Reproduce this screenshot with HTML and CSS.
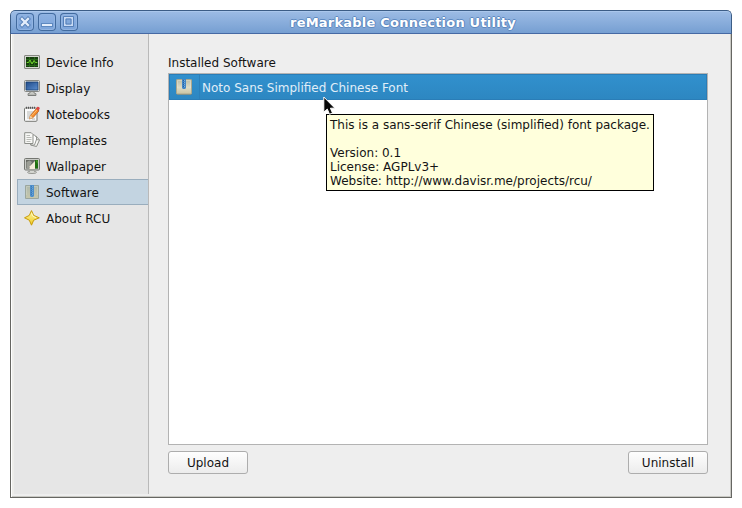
FILE: index.html
```html
<!DOCTYPE html>
<html lang="en">
<head>
<meta charset="utf-8">
<title>reMarkable Connection Utility</title>
<link rel="stylesheet" href="styles.css">
</head>
<body>
<svg width="0" height="0" class="defs">
  <defs>
    <linearGradient id="gold" x2="0" y2="1"><stop stop-color="#fff9a8"/><stop offset="1" stop-color="#efc91f"/></linearGradient>
    <linearGradient id="screen" x2="1" y2="1"><stop stop-color="#204a87"/><stop offset="1" stop-color="#5b8fd0"/></linearGradient>
    <linearGradient id="box" x2="0" y2="1"><stop stop-color="#b9bca8"/><stop offset=".55" stop-color="#dedbc5"/><stop offset="1" stop-color="#c9c4a3"/></linearGradient>
    <linearGradient id="boxmuted" x2="0" y2="1"><stop stop-color="#aeb9ac"/><stop offset="1" stop-color="#c6c7ac"/></linearGradient>
  </defs>
</svg>
<div class="window">
  <header class="titlebar">
    <div class="controls">
      <button class="control" aria-label="Close"><svg width="18" height="18" viewBox="0 0 18 18"><path d="M6 6l6 6m0-6l-6 6" stroke="#5680b8" stroke-width="4.2" stroke-linecap="square"/><path d="M6 6l6 6m0-6l-6 6" stroke="#e3edfb" stroke-width="2.3" stroke-linecap="square"/></svg></button>
      <button class="control" aria-label="Minimize"><svg width="18" height="18" viewBox="0 0 18 18"><path d="M3 10h12v4H3z" fill="#5e89c0"/><path d="M4 11h10v2H4z" fill="#e3edfb"/></svg></button>
      <button class="control" aria-label="Maximize"><svg width="18" height="18" viewBox="0 0 18 18"><path d="M3.5 3.5h10v10h-10z" fill="none" stroke="#5680b8"/><path d="M4.75 4.75h7.5v7.5h-7.5z" fill="none" stroke="#c9dbf4" stroke-width="1.5"/><path d="M6 6h5v5H6z" fill="#82a9dc" stroke="#5680b8"/></svg></button>
    </div>
    <h1>reMarkable Connection Utility</h1>
  </header>
  <div class="body">
    <nav class="sidebar">
      <a class="item"><svg width="16" height="16" viewBox="0 0 16 16"><rect x=".5" y="1.5" width="15" height="13" rx=".5" fill="#d5d7d1" stroke="#878983"/><path d="M2 3h12v10H2z" fill="#173f0d"/><path d="M2 5.5h12M2 8.5h12M2 11.5h12M5.5 3v10M10.5 3v10" stroke="#28671a"/><path d="M3 8.5h1.5L6 6l2 4 2-3.5 1.5 2H13" fill="none" stroke="#73d52b"/></svg><span>Device Info</span></a>
      <a class="item"><svg width="16" height="16" viewBox="0 0 16 16"><path d="M6 11h4v2l2 .7v1.8H4v-1.8L6 13z" fill="#c7c9c4" stroke="#777a76" stroke-width=".8"/><rect x=".5" y=".5" width="15" height="11" rx="1" fill="#deded9" stroke="#858783"/><path d="M2 2h12v8H2z" fill="url(#screen)" stroke="#163c70" stroke-width=".8"/><path d="M4 15.3h8" stroke="#777a76"/></svg><span>Display</span></a>
      <a class="item"><svg width="16" height="16" viewBox="0 0 16 16"><rect x=".5" y="2" width="12.5" height="13.3" rx="1" fill="#fafafa" stroke="#777974"/><path d="M2 1.8h10" stroke="#555" stroke-width="2" stroke-dasharray="1 1"/><path d="M3 6h7M3 8h6M3 10h3M3 12h3M8 13h3" stroke="#b6b8b4"/><path d="M5.4 13l1-3.5 6-7L15 4.8l-6 6.9z" fill="#f58b2a" stroke="#b85b18" stroke-width=".7"/><path d="M7.7 9.7l5.6-6.2" stroke="#ffc171"/><path d="M5.2 13.1l1.2-3.5 2.5 2.2z" fill="#edd1a5"/><path d="M12 2.5L13.2 1c1.2-1 3.2.7 2.3 2l-1.2 1.7z" fill="#dc4545"/></svg><span>Notebooks</span></a>
      <a class="item"><svg width="16" height="16" viewBox="0 0 16 16"><path d="M9 4l3.5.5 3 3.5-3 6.5-6-1.5z" fill="#f7f7f5" stroke="#8c8e89"/><path d="M7 2.5l3.5.5L13 6l-2.5 7H7z" fill="#fff" stroke="#92948f"/><path d="M.7.7h6.5L9 2.5v9H.7z" fill="#f8f8f6" stroke="#8c8e89"/><path d="M2.5 3.5H6m-3.5 2h5m-5 2h5m-5 2h4" stroke="#babcb7"/><path d="M12.5 4.8v2.8l2.8.3" fill="#dcdcda" stroke="#888a85" stroke-width=".8"/></svg><span>Templates</span></a>
      <a class="item"><svg width="16" height="16" viewBox="0 0 16 16"><ellipse cx="8" cy="14.3" rx="4.5" ry="1.2" fill="#d7d8d3" stroke="#81837d" stroke-width=".8"/><path d="M6 11h4v3H6z" fill="#d7d8d3"/><rect x=".5" y=".5" width="15" height="11.5" rx="1" fill="#c9cbc6" stroke="#747671"/><path d="M2 2h12v8.5H2z" fill="#686a65"/><path d="M2.5 10V4l3-1.5L8 4l-3 6z" fill="#9c9e96"/><path d="M11 2h3v8.5h-3z" fill="#206d10"/><path d="M12 2.5h1.5V6z" fill="#57a82e"/><path d="M5.5 11V8.5L11 3v8z" fill="#f4ead8"/></svg><span>Wallpaper</span></a>
      <a class="item selected"><svg width="16" height="16" viewBox="0 0 16 16"><path d="M1.5 1.5h13v13h-13z" fill="url(#boxmuted)" stroke="#9aa69e"/><path d="M2.5 11V2.5h11V11" fill="none" stroke="#cdd3c6" opacity=".6"/><path d="M6 1h4v11l-1 1H7l-1-1z" fill="#4e8fc9"/><path d="M7.5 2v9" stroke="#3977b5" stroke-dasharray="1 1"/><path d="M8.5 2v9" stroke="#6da6d8" stroke-dasharray="1 1"/></svg><span>Software</span></a>
      <a class="item"><svg width="16" height="16" viewBox="0 0 16 16"><path d="M7.5.6l2.2 4.8 5.6 2.4-5.6 2.4-2.2 5-2.2-5L.5 7.8l4.8-2.4z" fill="url(#gold)" stroke="#c99b08" stroke-linejoin="round"/><path d="M7.5 3l1.3 3.2L12 7.7" fill="none" stroke="#fffbd1" stroke-width=".8"/></svg><span>About RCU</span></a>
    </nav>
    <main class="pane">
      <h2>Installed Software</h2>
      <div class="list">
        <div class="row"><span class="cell-icon"><svg width="16" height="16" viewBox="0 0 16 16"><path d="M1 15.5h14.5" stroke="#777864" opacity=".6"/><rect x=".5" y=".5" width="15" height="14.5" rx=".6" fill="url(#box)" stroke="#aaa78d"/><path d="M1.5 9V1.5h13V9" fill="none" stroke="#e6e3d1" opacity=".5"/><path d="M6 0h4v9l-1 1H7L6 9z" fill="#4386c5"/><path d="M7.5 1v8" stroke="#245e9c" stroke-dasharray="1 1"/><path d="M8.5 1v8" stroke="#75afe3" stroke-dasharray="1 1"/></svg></span><span class="cell-text">Noto Sans Simplified Chinese Font</span></div>
      </div>
      <div class="actions"><button class="button">Upload</button><button class="button">Uninstall</button></div>
    </main>
  </div>
</div>
<div class="tooltip">This is a sans-serif Chinese (simplified) font package.

Version: 0.1
License: AGPLv3+
Website: http://www.davisr.me/projects/rcu/</div>
<svg class="cursor" width="13" height="20" viewBox="0 0 13 20"><path d="M.8 1v15.2l3.5-3.1 2.2 5.2 3-1.3-2.1-4.8h4.5z" fill="#080808" stroke="#fff"/></svg>
</body>
</html>
```
FILE: styles.css
```css
* { box-sizing: border-box; }
body {
  margin: 0;
  padding: 10px;
  width: 742px;
  height: 508px;
  overflow: hidden;
  background: #fff;
  color: #141414;
  font: 12px/14px "DejaVu Sans", sans-serif;
}
.defs { position: absolute; }
.window {
  display: flex;
  flex-direction: column;
  width: 722px;
  height: 488px;
  border-radius: 5px 5px 0 0;
  overflow: hidden;
  background: #eee;
}
.titlebar {
  display: flex;
  flex: 0 0 24px;
  align-items: center;
  padding: 0 5px;
  border: 1px solid #3c5d86;
  border-bottom-color: #4669a4;
  border-radius: 5px 5px 0 0;
  background: linear-gradient(#9dbce5, #769fd2);
  box-shadow: inset 0 1px #aac7ec;
}
.controls { display: flex; gap: 4px; width: 64px; }
.control {
  display: flex;
  width: 18px;
  height: 18px;
  padding: 0;
  border: 0;
  border-radius: 4px;
  background: linear-gradient(#8eb2e2, #7ba3d9);
  box-shadow: inset 0 0 0 1px #426b9f, inset 0 0 0 2px #91b4e2;
}
h1 {
  flex: 1;
  margin: 2px 0 0;
  color: #fff;
  font-size: 13px;
  line-height: 16px;
  letter-spacing: .22px;
  font-weight: bold;
  text-align: center;
  white-space: nowrap;
  text-shadow: -1px 0 #5e89c0, 1px 0 #5e89c0, 0 -1px #5e89c0, 0 1px #5e89c0;
}
.body {
  display: flex;
  flex: 1;
  min-height: 0;
  padding: 0 2px 3px 1px;
  border: 1px solid #666662;
  border-top: 0;
  box-shadow: inset 1px 0 #fff, inset -1px -1px #c9c9c4;
}
.sidebar {
  width: 137px;
  padding: 15px 0 0 5px;
  border-right: 1px solid #b9b9b9;
  background: linear-gradient(90deg, #ededea 2px, #e6e6e6 2px);
}
.item {
  display: flex;
  align-items: center;
  gap: 6px;
  height: 26px;
  padding-left: 6px;
  border: 1px solid transparent;
  border-right: 0;
}
.item span { padding-top: 2px; }
.item.selected {
  border-color: #99adbd;
  background: #c3d4e1;
}
.pane { flex: 1; padding: 22px 21px 0 19px; }
h2 { margin: 0; font: inherit; }
.list {
  height: 372px;
  margin-top: 3px;
  border: 1px solid #b3b3b3;
  background: #fff;
}
.row {
  display: flex;
  height: 26px;
  border: 1px solid #2a7db7;
  background: linear-gradient(#3190cd, #2d87c1);
  color: #e0eef8;
}
.cell-icon { display: flex; width: 30px; padding: 4px 0 0 6px; border-right: 1px solid #2b80ba; }
.cell-text { padding: 6px 2px 4px; white-space: nowrap; }
.actions { display: flex; justify-content: space-between; margin-top: 6px; }
.button {
  width: 80px;
  height: 23px;
  padding: 0;
  border: 1px solid #adadad;
  border-radius: 3px;
  background: linear-gradient(#fefefe, #ececec);
  color: #141414;
  font: inherit;
}
.tooltip {
  position: absolute;
  left: 326px;
  top: 114px;
  width: 328px;
  height: 77px;
  padding: 3px;
  border: 1px solid #000;
  background: #ffffdc;
  white-space: pre;
}
.cursor { position: absolute; left: 323px; top: 96px; }
```
